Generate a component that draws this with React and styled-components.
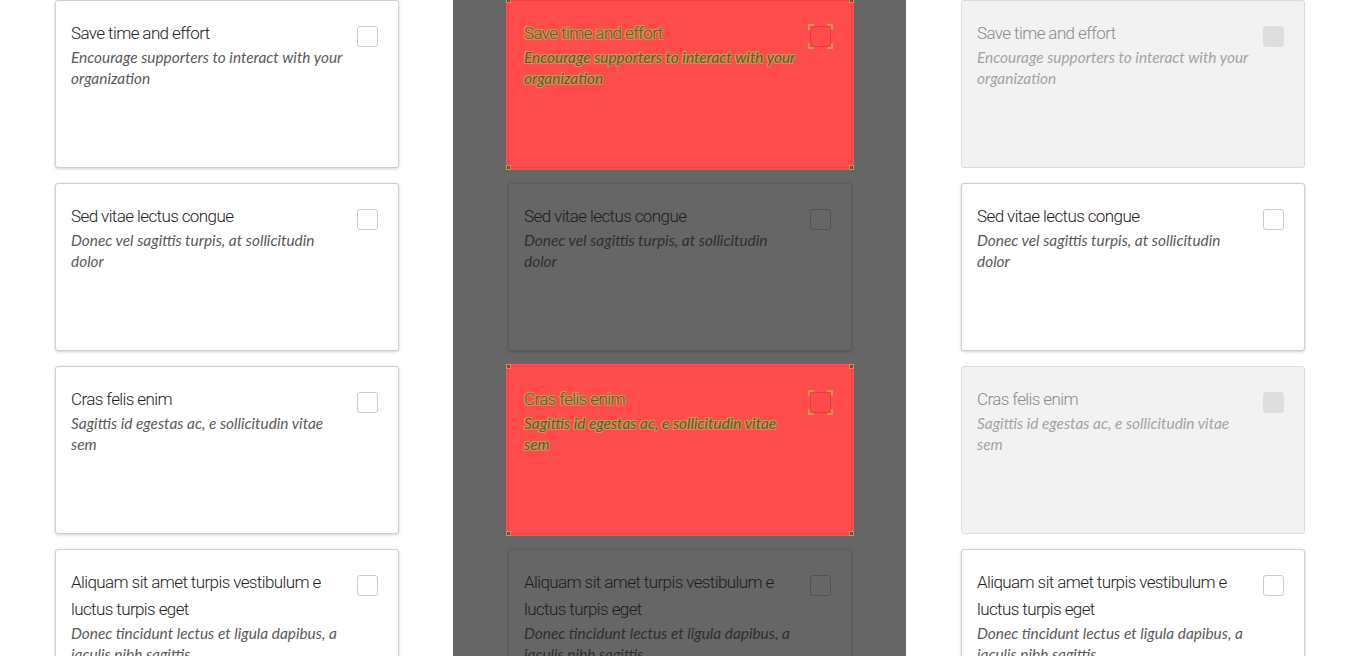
import React from 'react'
import styled, { createGlobalStyle, css } from 'styled-components'

const GlobalStyle = createGlobalStyle`
    html, body {
        margin: 0;
        padding: 0;
        background: #ffffff;
    }
    body {
        font-family: "Liberation Sans", Arial, sans-serif;
    }
`

const Page = styled.div`
    display: grid;
    grid-template-columns: repeat(3, 453px);
    height: 100vh;
    overflow: hidden;
`

const Column = styled.div`
    display: flex;
    flex-direction: column;
    gap: 15px;
    padding: 0 54px 0 55px;
    background: ${p => (p.$shaded ? '#666666' : 'transparent')};
`

const cardLooks = {
    normal: css`
        background: #ffffff;
        border: 1px solid #cfcfcf;
        box-shadow: 0 1px 3px rgba(0, 0, 0, 0.18);
    `,
    dimmed: css`
        background: #666666;
        border: 1px solid #5b5b5b;
        box-shadow: 0 1px 3px rgba(0, 0, 0, 0.2);
    `,
    flagged: css`
        background: #ff4b4b;
        border: 1px solid #e84444;
        box-shadow: 0 0 0 2px #ff4b4b;
    `,
    disabled: css`
        background: #f2f2f2;
        border: 1px solid #dddddd;
    `,
}

const Card = styled.div`
    position: relative;
    flex: 0 0 auto;
    height: 168px;
    box-sizing: border-box;
    border-radius: 3px;
    display: flex;
    align-items: flex-start;
    gap: 8px;
    padding: 19px 20px 0 15px;
    ${p => cardLooks[p.$look]}
`

const Corner = styled.span`
    position: absolute;
    width: 3px;
    height: 3px;
    background: #555;
    border: 1px solid #d39446;
    ${p => (p.$top ? 'top: -3px;' : 'bottom: -3px;')}
    ${p => (p.$left ? 'left: -3px;' : 'right: -3px;')}
`

const TextBlock = styled.div`
    flex: 1;
    min-width: 0;
`

const outline = css`
    text-shadow: 1px 0 #d39446, -1px 0 #d39446, 0 1px #d39446, 0 -1px #d39446,
        1px 1px #d39446, -1px -1px #d39446, 1px -1px #d39446, -1px 1px #d39446;
`

const titleColors = {
    normal: '#222222',
    dimmed: '#1c1c1c',
    flagged: '#5e5444',
    disabled: '#8a8a8a',
}

const textColors = {
    normal: '#5a5a5a',
    dimmed: '#2e2e2e',
    flagged: '#5e5444',
    disabled: '#a3a3a3',
}

const Title = styled.div`
    font-family: Roboto, "Liberation Sans", sans-serif;
    font-weight: 300;
    font-size: 17px;
    letter-spacing: -0.6px;
    line-height: 27px;
    color: ${p => titleColors[p.$look]};
    ${p => p.$look === 'flagged' && outline}
`

const Subtitle = styled.div`
    font-family: Lato, "Liberation Sans", sans-serif;
    font-style: italic;
    font-size: 15.4px;
    line-height: 21px;
    color: ${p => textColors[p.$look]};
    ${p => p.$look === 'flagged' && outline}
`

const checkLooks = {
    normal: css`
        border: 1px solid #cccccc;
        background: #ffffff;
    `,
    dimmed: css`
        border: 1px solid #525252;
        background: #666666;
    `,
    flagged: css`
        border: 1px solid #e43c3c;
        background: #ff4b4b;
    `,
    disabled: css`
        border: 1px solid #dedede;
        background: #dedede;
    `,
}

const Check = styled.span`
    position: relative;
    flex: 0 0 auto;
    width: 21px;
    height: 21px;
    box-sizing: border-box;
    margin-top: 6px;
    border-radius: 3px;
    ${p => checkLooks[p.$look]}
`

const Bracket = styled.span`
    position: absolute;
    width: 4px;
    height: 4px;
    border-color: #d39446;
    border-style: solid;
    border-width: 0;
    ${p => (p.$top ? 'top: -3px; border-top-width: 2px;' : 'bottom: -3px; border-bottom-width: 2px;')}
    ${p => (p.$left ? 'left: -3px; border-left-width: 2px;' : 'right: -3px; border-right-width: 2px;')}
`

const items = [
    { title: 'Save time and effort', text: 'Encourage supporters to interact with your organization' },
    { title: 'Sed vitae lectus congue', text: 'Donec vel sagittis turpis, at sollicitudin dolor' },
    { title: 'Cras felis enim', text: 'Sagittis id egestas ac, e sollicitudin vitae sem' },
    { title: 'Aliquam sit amet turpis vestibulum e luctus turpis eget', text: 'Donec tincidunt lectus et ligula dapibus, a iaculis nibh sagittis' },
]

const corners = [
    { top: true, left: true },
    { top: true, left: false },
    { top: false, left: true },
    { top: false, left: false },
]

function OptionCard({ look, title, text }) {
    const flagged = look === 'flagged'
    return (
        <Card $look={look}>
            {flagged && corners.map((c, i) => <Corner key={i} $top={c.top} $left={c.left} />)}
            <TextBlock>
                <Title $look={look}>{title}</Title>
                <Subtitle $look={look}>{text}</Subtitle>
            </TextBlock>
            <Check $look={look}>
                {flagged && corners.map((c, i) => <Bracket key={i} $top={c.top} $left={c.left} />)}
            </Check>
        </Card>
    )
}

const middleLooks = ['flagged', 'dimmed', 'flagged', 'dimmed']
const rightLooks = ['disabled', 'normal', 'disabled', 'normal']

export default function App() {
    return (
        <>
            <GlobalStyle />
            <Page>
                <Column>
                    {items.map((it, i) => <OptionCard key={i} look="normal" {...it} />)}
                </Column>
                <Column $shaded>
                    {items.map((it, i) => <OptionCard key={i} look={middleLooks[i]} {...it} />)}
                </Column>
                <Column>
                    {items.map((it, i) => <OptionCard key={i} look={rightLooks[i]} {...it} />)}
                </Column>
            </Page>
        </>
    )
}
